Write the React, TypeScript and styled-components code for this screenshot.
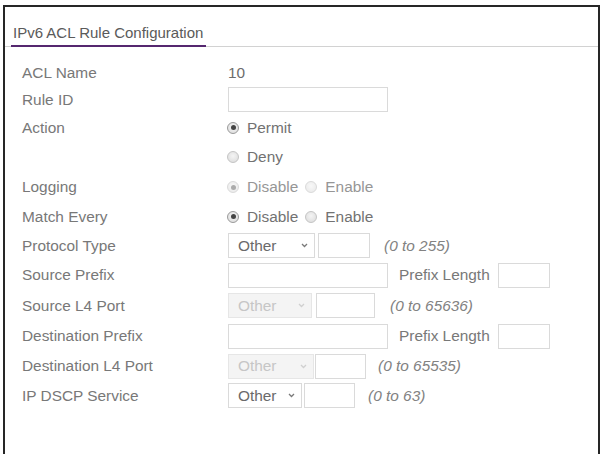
import React from 'react';
import styled, { createGlobalStyle } from 'styled-components';

const GlobalStyle = createGlobalStyle`
  html, body {
    margin: 0;
    padding: 0;
    background: #ffffff;
  }
  body {
    font-family: "Liberation Sans", Arial, sans-serif;
  }
`;

const Frame = styled.div`
  margin: 5px 3px 0 3px;
  height: 449px;
  box-sizing: border-box;
  border: 2px solid #262626;
  border-bottom: none;
  background: #ffffff;
  overflow: hidden;
`;

const Header = styled.div`
  display: flex;
  align-items: flex-end;
  height: 39px;
  padding-left: 6px;
  border-bottom: 1px solid #d2d2d2;
`;

const Title = styled.div`
  padding: 0 3px 4px 2px;
  margin-bottom: -1px;
  border-bottom: 2px solid #55276f;
  font-size: 15px;
  line-height: 17px;
  color: #5a5a5a;
`;

const Form = styled.div`
  padding: 13px 0 0 17px;
`;

const Row = styled.div<{ $h?: number }>`
  display: grid;
  grid-template-columns: 206px 1fr;
  align-items: center;
  height: ${(p) => p.$h ?? 30}px;
`;

const Label = styled.div`
  font-size: 15.4px;
  color: #787878;
`;

const Value = styled.div`
  font-size: 15.4px;
  color: #6c6c6c;
`;

const Field = styled.div<{ $gap?: number }>`
  display: flex;
  align-items: center;
  gap: ${(p) => p.$gap ?? 0}px;
`;

const TextInput = styled.input<{ $w: number }>`
  width: ${(p) => p.$w}px;
  height: 25px;
  box-sizing: border-box;
  margin: 0;
  padding: 0 6px;
  border: 1px solid #dadada;
  background: #ffffff;
  font-family: inherit;
  font-size: 14px;
  outline: none;
`;

const SelectBox = styled.div<{ $w: number; $disabled?: boolean }>`
  width: ${(p) => p.$w}px;
  height: 25px;
  box-sizing: border-box;
  display: flex;
  align-items: center;
  justify-content: space-between;
  padding: 0 6px 0 9px;
  border: 1px solid ${(p) => (p.$disabled ? '#e6e6e6' : '#dadada')};
  background: ${(p) => (p.$disabled ? '#f4f4f4' : '#ffffff')};
  color: ${(p) => (p.$disabled ? '#c6c6c6' : '#6a6a6a')};
  font-size: 15.4px;
`;

const Hint = styled.span<{ $ml?: number }>`
  margin-left: ${(p) => p.$ml ?? 11}px;
  font-size: 15.4px;
  font-style: italic;
  color: #828282;
`;

const Caption = styled.span`
  margin: 0 8px 0 11px;
  font-size: 15.4px;
  color: #787878;
`;

const RadioGroup = styled.div`
  display: flex;
  align-items: center;
  gap: 8px;
`;

const RadioOption = styled.label<{ $dim?: boolean }>`
  display: flex;
  align-items: center;
  gap: 8px;
  font-size: 15.4px;
  color: ${(p) => (p.$dim ? '#969696' : '#727272')};
`;

const RadioDot = styled.span<{ $on?: boolean; $dim?: boolean }>`
  width: 12px;
  height: 12px;
  margin-left: -1px;
  box-sizing: border-box;
  border-radius: 50%;
  display: inline-flex;
  align-items: center;
  justify-content: center;
  border: 1px solid ${(p) => (p.$dim ? '#dadada' : p.$on ? '#9a9a9a' : '#c4c4c4')};
  background: ${(p) =>
    p.$dim
      ? 'radial-gradient(circle at 50% 40%, #f8f8f8, #e8e8e8)'
      : 'radial-gradient(circle at 50% 40%, #f4f4f4, #dadada)'};

  &::after {
    content: '';
    display: ${(p) => (p.$on ? 'block' : 'none')};
    width: 5px;
    height: 5px;
    border-radius: 50%;
    background: ${(p) => (p.$dim ? '#ababab' : '#444444')};
  }
`;

const Chevron: React.FC<{ color: string }> = ({ color }) => (
  <svg width="7" height="5" viewBox="0 0 7 5">
    <path d="M1 1 L3.5 3.5 L6 1" fill="none" stroke={color} strokeWidth="1.3" />
  </svg>
);

const Select: React.FC<{ w: number; disabled?: boolean }> = ({ w, disabled }) => (
  <SelectBox $w={w} $disabled={disabled}>
    <span>Other</span>
    <Chevron color={disabled ? '#d0d0d0' : '#7a7a7a'} />
  </SelectBox>
);

const Radio: React.FC<{ label: string; on?: boolean; dim?: boolean }> = ({ label, on, dim }) => (
  <RadioOption $dim={dim}>
    <RadioDot $on={on} $dim={dim} />
    {label}
  </RadioOption>
);

export default function App() {
  return (
    <>
      <GlobalStyle />
      <Frame>
        <Header>
          <Title>IPv6 ACL Rule Configuration</Title>
        </Header>
        <Form>
          <Row $h={26}>
            <Label>ACL Name</Label>
            <Value>10</Value>
          </Row>
          <Row $h={27}>
            <Label>Rule ID</Label>
            <Field>
              <TextInput $w={160} />
            </Field>
          </Row>
          <Row $h={29}>
            <Label>Action</Label>
            <Radio label="Permit" on />
          </Row>
          <Row>
            <Label />
            <Radio label="Deny" />
          </Row>
          <Row>
            <Label>Logging</Label>
            <RadioGroup>
              <Radio label="Disable" on dim />
              <Radio label="Enable" dim />
            </RadioGroup>
          </Row>
          <Row $h={29}>
            <Label>Match Every</Label>
            <RadioGroup>
              <Radio label="Disable" on />
              <Radio label="Enable" />
            </RadioGroup>
          </Row>
          <Row $h={29}>
            <Label>Protocol Type</Label>
            <Field $gap={3}>
              <Select w={87} />
              <TextInput $w={52} />
              <Hint>(0 to 255)</Hint>
            </Field>
          </Row>
          <Row>
            <Label>Source Prefix</Label>
            <Field>
              <TextInput $w={160} />
              <Caption>Prefix Length</Caption>
              <TextInput $w={52} />
            </Field>
          </Row>
          <Row $h={31}>
            <Label>Source L4 Port</Label>
            <Field $gap={4}>
              <Select w={84} disabled />
              <TextInput $w={59} />
              <Hint>(0 to 65636)</Hint>
            </Field>
          </Row>
          <Row>
            <Label>Destination Prefix</Label>
            <Field>
              <TextInput $w={160} />
              <Caption>Prefix Length</Caption>
              <TextInput $w={52} />
            </Field>
          </Row>
          <Row>
            <Label>Destination L4 Port</Label>
            <Field $gap={1}>
              <Select w={86} disabled />
              <TextInput $w={51} />
              <Hint>(0 to 65535)</Hint>
            </Field>
          </Row>
          <Row $h={29}>
            <Label>IP DSCP Service</Label>
            <Field $gap={2}>
              <Select w={74} />
              <TextInput $w={51} />
              <Hint>(0 to 63)</Hint>
            </Field>
          </Row>
        </Form>
      </Frame>
    </>
  );
}
